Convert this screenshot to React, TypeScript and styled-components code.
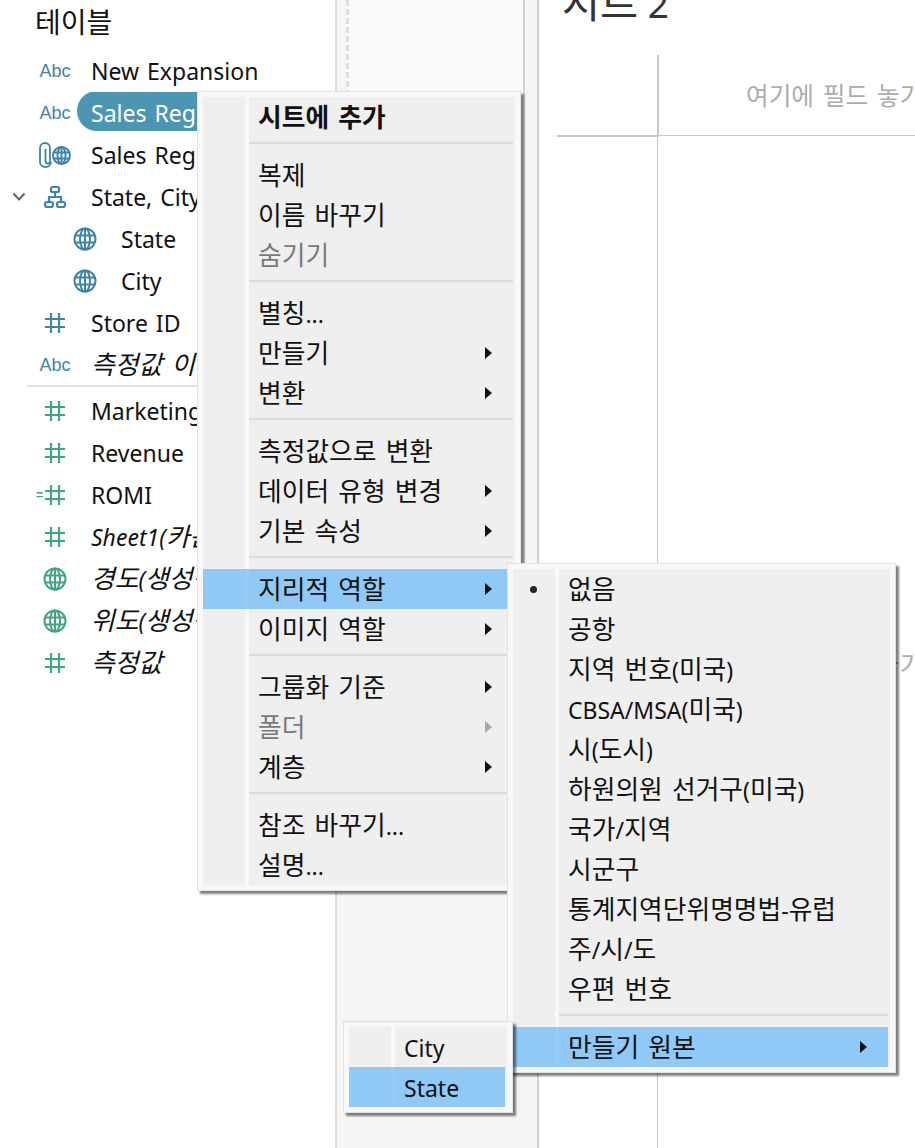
import React from 'react';
import styled, { createGlobalStyle } from 'styled-components';

const GlobalStyle = createGlobalStyle`
  html, body {
    margin: 0;
    padding: 0;
    background: #ffffff;
  }
  * {
    box-sizing: border-box;
  }
`;

const FONT = `'Noto Sans', 'Noto Sans CJK KR', sans-serif`;
const BLUE = '#3f84a6';
const GREEN = '#43a483';

const Page = styled.div`
  position: relative;
  display: grid;
  grid-template-columns: 337px 202px 1fr;
  width: 915px;
  height: 1148px;
  overflow: hidden;
  font-family: ${FONT};
  color: #111111;
`;

/* hangul runs sit a little larger than the latin text next to them */
const Hangul = styled.span`
  font-size: 1.12em;
  word-spacing: 2.5px;
  line-height: 1;
`;

const withHangul = (text: string) =>
  text.split(/([가-힣]+(?: [가-힣]+)*)/).map((part, i) =>
    i % 2 ? <Hangul key={i}>{part}</Hangul> : part,
  );

/* left data pane */
const Sidebar = styled.aside`
  border-right: 2px solid #dcdcdc;
  background: #ffffff;
`;

const SidebarTitle = styled.h2`
  margin: 0;
  height: 50px;
  padding: 6px 0 0 35px;
  font-size: 25px;
  line-height: 34px;
  font-weight: 400;
`;

const FieldRow = styled.div`
  display: flex;
  align-items: center;
  height: 42px;
  white-space: nowrap;
  overflow: hidden;
`;

const Twisty = styled.span<{ $depth: number }>`
  display: flex;
  align-items: center;
  justify-content: flex-end;
  flex: none;
  width: ${(p) => (p.$depth ? 57 : 27)}px;
  padding-right: 1px;
  color: #666666;
`;

const IconSlot = styled.span<{ $color: string }>`
  display: flex;
  align-items: center;
  justify-content: center;
  flex: none;
  width: 56px;
  color: ${(p) => p.$color};
`;

const AbcMark = styled.span`
  font-family: 'Liberation Sans', sans-serif;
  font-size: 18px;
  line-height: 20px;
`;

const FieldName = styled.span<{ $selected?: boolean; $italic?: boolean }>`
  display: flex;
  align-items: center;
  flex: none;
  height: 40px;
  margin: ${(p) => (p.$selected ? '-4px 0 0 -6px' : '0 0 0 8px')};
  padding: ${(p) => (p.$selected ? '4px 40px 0 14px' : '0')};
  border-radius: 20px 0 0 20px;
  background: ${(p) => (p.$selected ? '#4c96b4' : 'transparent')};
  color: ${(p) => (p.$selected ? '#ffffff' : '#111111')};
  font-size: 23px;
  font-style: ${(p) => (p.$italic ? 'italic' : 'normal')};
  word-spacing: 2px;
  white-space: pre;
`;

const FieldDivider = styled.div`
  height: 4px;
  margin: 0 0 0 27px;
  border-top: 2px solid #e2e2e2;
  transform: translateY(-1px);
`;

/* middle strip with the dashed drop area */
const Shelves = styled.section`
  display: flex;
  align-items: flex-start;
  padding-left: 9px;
  border-right: 2px solid #d2d2d2;
  background: #f5f5f5;
`;

const ShelfPanel = styled.div`
  width: 179px;
  height: 600px;
  border-left: 3px dashed #dddddd;
  border-right: 2px solid #d2d2d2;
  background: #fafafa;
`;

/* worksheet */
const Sheet = styled.main`
  display: flex;
  flex-direction: column;
  min-width: 0;
  background: #ffffff;
`;

const SheetHeader = styled.header`
  display: flex;
  align-items: flex-end;
  height: 55px;
  padding: 0 0 29px 23px;
  overflow: hidden;
`;

const SheetTitle = styled.h1`
  margin: 0;
  font-size: 37px;
  line-height: 44px;
  font-weight: 400;
  color: #333333;
  white-space: pre;
`;

const ViewGrid = styled.div`
  flex: 1;
  display: grid;
  grid-template-columns: 101px 1fr;
  grid-template-rows: 81px 1fr;
  margin-left: 18px;
`;

const CornerCell = styled.div`
  height: 82px;
  margin-right: -1px;
  border-right: 2px solid #c8c8c8;
  border-bottom: 2px solid #c8c8c8;
`;

const ColumnShelf = styled.div`
  display: flex;
  align-items: center;
  padding: 2px 0 0 88px;
  border-bottom: 1px solid #c8c8c8;
  overflow: hidden;
`;

const RowShelf = styled.div`
  border-right: 1px solid #c8c8c8;
`;

const ViewBody = styled.div`
  display: flex;
  align-items: center;
  padding: 46px 0 0 88px;
  overflow: hidden;
`;

const DropHint = styled.span`
  flex: none;
  font-size: 22px;
  color: #acacac;
  white-space: pre;
`;

/* popup menus */
const Menu = styled.div<{ $left: number; $top: number; $width: number; $z: number }>`
  position: absolute;
  left: ${(p) => p.$left}px;
  top: ${(p) => p.$top}px;
  z-index: ${(p) => p.$z};
  width: ${(p) => p.$width}px;
  padding: 5px;
  border: 1px solid #e2e2e2;
  background: #f8f8f8;
  box-shadow: 3px 3px 2px rgba(0, 0, 0, 0.5);
  --gutter: 42px;
`;

const MenuBody = styled.div`
  background: linear-gradient(
    to right,
    #efefef var(--gutter),
    #f8f8f8 var(--gutter) calc(var(--gutter) + 4px),
    #efefef calc(var(--gutter) + 4px)
  );
`;

const MenuRow = styled.div<{ $active?: boolean }>`
  position: relative;
  display: flex;
  align-items: center;
  height: 40px;
  margin-right: 2px;
  padding: 0 21px 0 calc(var(--gutter) + 13px);
  background: ${(p) =>
    p.$active
      ? `linear-gradient(to right, #90c8f6 var(--gutter), #98ccf7 var(--gutter) calc(var(--gutter) + 4px), #90c8f6 calc(var(--gutter) + 4px))`
      : 'transparent'};
`;

const MenuLabel = styled.span<{ $bold?: boolean; $disabled?: boolean }>`
  flex: 1;
  padding-top: 2px;
  font-size: 23px;
  font-weight: ${(p) => (p.$bold ? 700 : 400)};
  color: ${(p) => (p.$disabled ? '#7a7a7a' : '#111111')};
  white-space: pre;
`;

const SubArrow = styled.i<{ $disabled?: boolean }>`
  flex: none;
  width: 0;
  height: 0;
  border-top: 6px solid transparent;
  border-bottom: 6px solid transparent;
  border-left: 7px solid ${(p) => (p.$disabled ? '#a8a8a8' : '#111111')};
`;

const CheckDot = styled.i`
  position: absolute;
  left: 17px;
  top: 17px;
  width: 7px;
  height: 7px;
  border-radius: 50%;
  background: #222222;
`;

const MenuSeparator = styled.div`
  height: 18px;
  margin: 0 2px 0 calc(var(--gutter) + 4px);
  padding-top: 5px;

  &::after {
    content: '';
    display: block;
    height: 2px;
    background: #dadada;
  }
`;

/* icons */
const HashIcon = () => (
  <svg width="20" height="20" viewBox="0 0 20 20" fill="none" stroke="currentColor" strokeWidth="2.2">
    <path d="M6 0v20M14 0v20M0 6h20M0 14h20" />
  </svg>
);

const GlobeIcon = () => (
  <svg width="24" height="24" viewBox="0 0 24 24" fill="none" stroke="currentColor" strokeWidth="2">
    <circle cx="12" cy="12" r="10.5" />
    <ellipse cx="12" cy="12" rx="5" ry="10.5" />
    <path d="M2 8.5h20M2 15.5h20M12 1.5v21" />
  </svg>
);

const ClipGlobeIcon = () => (
  <svg width="32" height="26" viewBox="0 0 32 26" fill="none" stroke="currentColor" strokeWidth="2">
    <path
      d="M12 20c0 3-2.500 5-5.500 5S1 23 1 20V6c0-3 2.200-5 5-5s5 2 5 5v13c0 1.500-1 2.500-2.200 2.500S6.500 20.500 6.500 19V7"
      strokeWidth="1.8"
    />
    <circle cx="22.500" cy="13.500" r="8.500" />
    <ellipse cx="22.500" cy="13.500" rx="4" ry="8.500" />
    <path d="M14.500 10.500h16M14.500 16.500h16M22.500 5v17" />
  </svg>
);

const HierarchyIcon = () => (
  <svg width="24" height="24" viewBox="0 0 24 24" fill="none" stroke="currentColor" strokeWidth="2.200">
    <rect x="8" y="2" width="8" height="5" rx="1.500" />
    <rect x="2" y="17" width="8" height="5" rx="2" />
    <rect x="14" y="17" width="8" height="5" rx="2" />
    <path d="M12 7v5M6 17v-5h12v5" />
  </svg>
);

const ChevronIcon = () => (
  <svg width="14" height="10" viewBox="0 0 14 10" fill="none" stroke="currentColor" strokeWidth="2">
    <path d="M1.500 1.500 7 7.500l5.500-6" />
  </svg>
);

const CalcMark = styled.span`
  display: flex;
  align-items: center;
  margin-left: -9px;
`;

const CalcEquals = styled.span`
  width: 9px;
  font-family: 'Liberation Sans', sans-serif;
  font-size: 12px;
  font-weight: 700;
  line-height: 12px;
`;

type Field = {
  name: string;
  icon: React.ReactNode;
  color: string;
  depth?: number;
  italic?: boolean;
  selected?: boolean;
  twisty?: boolean;
};

const upperFields: Field[] = [
  { name: 'New Expansion', icon: <AbcMark>Abc</AbcMark>, color: BLUE },
  { name: 'Sales Region', icon: <AbcMark>Abc</AbcMark>, color: BLUE, selected: true },
  { name: 'Sales Region', icon: <ClipGlobeIcon />, color: BLUE },
  { name: 'State, City', icon: <HierarchyIcon />, color: BLUE, twisty: true },
  { name: 'State', icon: <GlobeIcon />, color: BLUE, depth: 1 },
  { name: 'City', icon: <GlobeIcon />, color: BLUE, depth: 1 },
  { name: 'Store ID', icon: <HashIcon />, color: BLUE },
  { name: '측정값 이름', icon: <AbcMark>Abc</AbcMark>, color: BLUE, italic: true },
];

const lowerFields: Field[] = [
  { name: 'Marketing', icon: <HashIcon />, color: GREEN },
  { name: 'Revenue', icon: <HashIcon />, color: GREEN },
  {
    name: 'ROMI',
    icon: (
      <CalcMark>
        <CalcEquals>=</CalcEquals>
        <HashIcon />
      </CalcMark>
    ),
    color: GREEN,
  },
  { name: 'Sheet1(카운트)', icon: <HashIcon />, color: GREEN, italic: true },
  { name: '경도(생성됨)', icon: <GlobeIcon />, color: GREEN, italic: true },
  { name: '위도(생성됨)', icon: <GlobeIcon />, color: GREEN, italic: true },
  { name: '측정값', icon: <HashIcon />, color: GREEN, italic: true },
];

const FieldList = ({ fields }: { fields: Field[] }) => (
  <>
    {fields.map((f, i) => (
      <FieldRow key={i}>
        <Twisty $depth={f.depth ?? 0}>{f.twisty && <ChevronIcon />}</Twisty>
        <IconSlot $color={f.color}>{f.icon}</IconSlot>
        <FieldName $selected={f.selected} $italic={f.italic}>
          <span>{withHangul(f.name)}</span>
        </FieldName>
      </FieldRow>
    ))}
  </>
);

type Entry =
  | { sep: true }
  | { sep?: false; label: string; arrow?: boolean; bold?: boolean; disabled?: boolean; active?: boolean; checked?: boolean };

const mainMenu: Entry[] = [
  { label: '시트에 추가', bold: true },
  { sep: true },
  { label: '복제' },
  { label: '이름 바꾸기' },
  { label: '숨기기', disabled: true },
  { sep: true },
  { label: '별칭...' },
  { label: '만들기', arrow: true },
  { label: '변환', arrow: true },
  { sep: true },
  { label: '측정값으로 변환' },
  { label: '데이터 유형 변경', arrow: true },
  { label: '기본 속성', arrow: true },
  { sep: true },
  { label: '지리적 역할', arrow: true, active: true },
  { label: '이미지 역할', arrow: true },
  { sep: true },
  { label: '그룹화 기준', arrow: true },
  { label: '폴더', arrow: true, disabled: true },
  { label: '계층', arrow: true },
  { sep: true },
  { label: '참조 바꾸기...' },
  { label: '설명...' },
];

const roleMenu: Entry[] = [
  { label: '없음', checked: true },
  { label: '공항' },
  { label: '지역 번호(미국)' },
  { label: 'CBSA/MSA(미국)' },
  { label: '시(도시)' },
  { label: '하원의원 선거구(미국)' },
  { label: '국가/지역' },
  { label: '시군구' },
  { label: '통계지역단위명명법-유럽' },
  { label: '주/시/도' },
  { label: '우편 번호' },
  { sep: true },
  { label: '만들기 원본', arrow: true, active: true },
];

const sourceMenu: Entry[] = [{ label: 'City' }, { label: 'State', active: true }];

const MenuEntries = ({ entries }: { entries: Entry[] }) => (
  <MenuBody>
    {entries.map((e, i) =>
      e.sep ? (
        <MenuSeparator key={i} />
      ) : (
        <MenuRow key={i} $active={e.active}>
          {e.checked && <CheckDot />}
          <MenuLabel $bold={e.bold} $disabled={e.disabled}>
            {withHangul(e.label)}
          </MenuLabel>
          {e.arrow && <SubArrow $disabled={e.disabled} />}
        </MenuRow>
      ),
    )}
  </MenuBody>
);

export default function App() {
  return (
    <Page>
      <GlobalStyle />
      <Sidebar>
        <SidebarTitle>{withHangul('테이블')}</SidebarTitle>
        <FieldList fields={upperFields} />
        <FieldDivider />
        <FieldList fields={lowerFields} />
      </Sidebar>

      <Shelves>
        <ShelfPanel />
      </Shelves>

      <Sheet>
        <SheetHeader>
          <SheetTitle>{withHangul('시트 2')}</SheetTitle>
        </SheetHeader>
        <ViewGrid>
          <CornerCell />
          <ColumnShelf>
            <DropHint>{withHangul('여기에 필드 놓기')}</DropHint>
          </ColumnShelf>
          <RowShelf />
          <ViewBody>
            <DropHint>{withHangul('여기에 필드 놓기')}</DropHint>
          </ViewBody>
        </ViewGrid>
      </Sheet>

      <Menu $left={197} $top={91} $width={324} $z={1}>
        <MenuEntries entries={mainMenu} />
      </Menu>
      <Menu $left={507} $top={563} $width={389} $z={2}>
        <MenuEntries entries={roleMenu} />
      </Menu>
      <Menu $left={343} $top={1021} $width={170} $z={3}>
        <MenuEntries entries={sourceMenu} />
      </Menu>
    </Page>
  );
}
